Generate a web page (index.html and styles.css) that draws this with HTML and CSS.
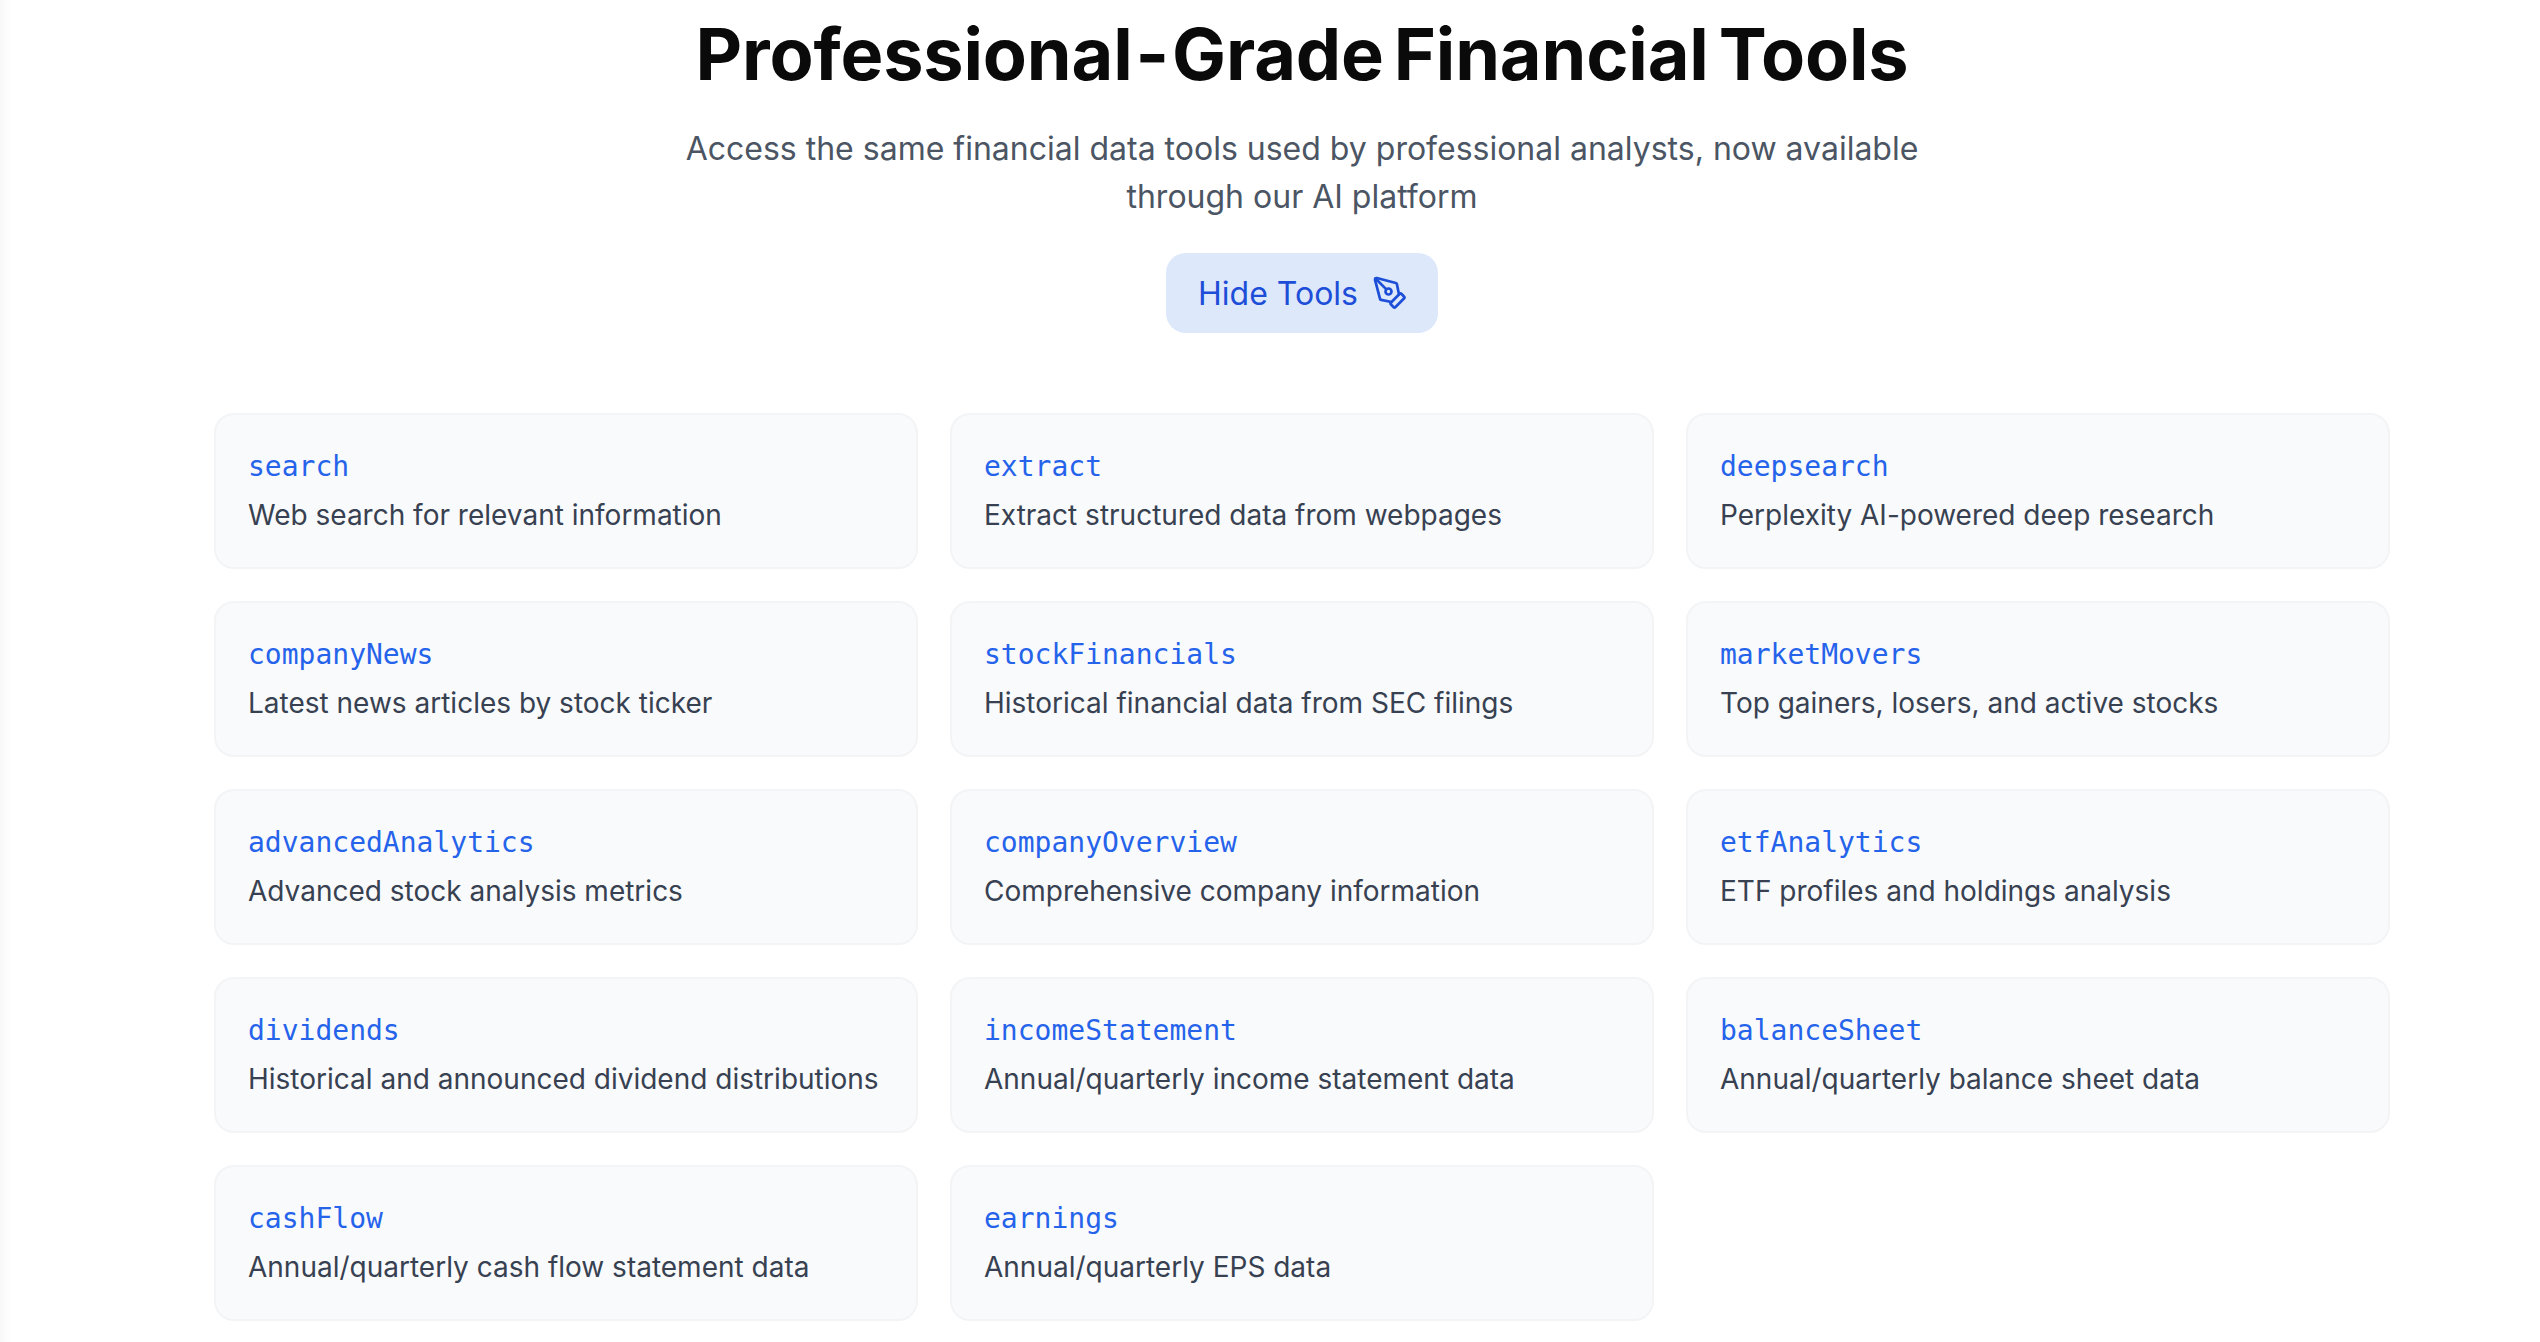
FILE: index.html
```html
<!DOCTYPE html>
<html lang="en">
  <head>
    <meta charset="UTF-8" />
    <meta name="viewport" content="width=device-width, initial-scale=1" />
    <title>Financial Tools</title>
    <link rel="stylesheet" href="styles.css">
  </head>
  <body>
    <main class="main">
      <section class="intro">
        <h1>Professional<span class="dash">-</span>Grade Financial Tools</h1>
        <p class="lead">Access the same financial data tools used by professional analysts, now available through our AI platform</p>
        <button class="toggle" type="button">
          Hide Tools
          <svg class="toggle-icon" viewBox="0 0 24 24" fill="none" stroke="currentColor" stroke-width="1.8" stroke-linecap="round" stroke-linejoin="round">
            <path d="M15.707 21.293a1 1 0 0 1-1.414 0l-1.586-1.586a1 1 0 0 1 0-1.414l5.586-5.586a1 1 0 0 1 1.414 0l1.586 1.586a1 1 0 0 1 0 1.414z" />
            <path d="m18 13-1.375-6.874a1 1 0 0 0-.746-.776L3.235 2.028a1 1 0 0 0-1.207 1.207L5.35 15.879a1 1 0 0 0 .776.746L13 18" />
            <path d="m2.3 2.3 7.286 7.286" />
            <circle cx="11" cy="11" r="2" />
          </svg>
        </button>
      </section>

      <div class="tools">
        <div class="tool"><code>search</code><p>Web search for relevant information</p></div>
        <div class="tool"><code>extract</code><p>Extract structured data from webpages</p></div>
        <div class="tool"><code>deepsearch</code><p>Perplexity AI-powered deep research</p></div>
        <div class="tool"><code>companyNews</code><p>Latest news articles by stock ticker</p></div>
        <div class="tool"><code>stockFinancials</code><p>Historical financial data from SEC filings</p></div>
        <div class="tool"><code>marketMovers</code><p>Top gainers, losers, and active stocks</p></div>
        <div class="tool"><code>advancedAnalytics</code><p>Advanced stock analysis metrics</p></div>
        <div class="tool"><code>companyOverview</code><p>Comprehensive company information</p></div>
        <div class="tool"><code>etfAnalytics</code><p>ETF profiles and holdings analysis</p></div>
        <div class="tool"><code>dividends</code><p>Historical and announced dividend distributions</p></div>
        <div class="tool"><code>incomeStatement</code><p>Annual/quarterly income statement data</p></div>
        <div class="tool"><code>balanceSheet</code><p>Annual/quarterly balance sheet data</p></div>
        <div class="tool"><code>cashFlow</code><p>Annual/quarterly cash flow statement data</p></div>
        <div class="tool"><code>earnings</code><p>Annual/quarterly EPS data</p></div>
      </div>
    </main>
  </body>
</html>
```

FILE: styles.css
```css
html,
body {
  margin: 0;
  height: 100%;
  overflow: hidden;
}

body {
  font-family: Inter, "Noto Sans", sans-serif;
  background: white;
  background-image: linear-gradient(90deg, #f8f8f8, #ffffff 12px);
}

.main {
  margin-left: 64px;
  padding: 0 150px;
}

.intro {
  display: flex;
  flex-direction: column;
  align-items: center;
  text-align: center;
}

h1 {
  margin: 8px 0 0;
  font-size: 72px;
  line-height: 92px;
  font-weight: 700;
  letter-spacing: -0.15px;
  word-spacing: -7px;
  color: #0a0a0a;
}

.dash {
  margin: 0 3px;
}

.lead {
  width: 1280px;
  margin: 25px 0 0;
  font-size: 32px;
  line-height: 48px;
  color: #4b5563;
}

.toggle {
  display: flex;
  align-items: center;
  gap: 14px;
  height: 80px;
  margin-top: 32px;
  padding: 0 30px 0 32px;
  border: none;
  border-radius: 20px;
  background: #dde8fb;
  color: #1d4ed8;
  font-family: inherit;
  font-size: 32px;
}

.toggle-icon {
  width: 36px;
  height: 36px;
}

.tools {
  display: grid;
  grid-template-columns: repeat(3, 1fr);
  gap: 32px;
  margin-top: 80px;
}

.tool {
  box-sizing: border-box;
  height: 156px;
  padding: 32px;
  background: #f9fafb;
  border: 2px solid #f3f4f6;
  border-radius: 20px;
}

.tool code {
  display: block;
  font-family: "DejaVu Sans Mono", monospace;
  font-size: 28px;
  line-height: 40px;
  color: #2563eb;
}

.tool p {
  margin: 8px 0 0;
  font-size: 28px;
  line-height: 40px;
  color: #374151;
}
```
